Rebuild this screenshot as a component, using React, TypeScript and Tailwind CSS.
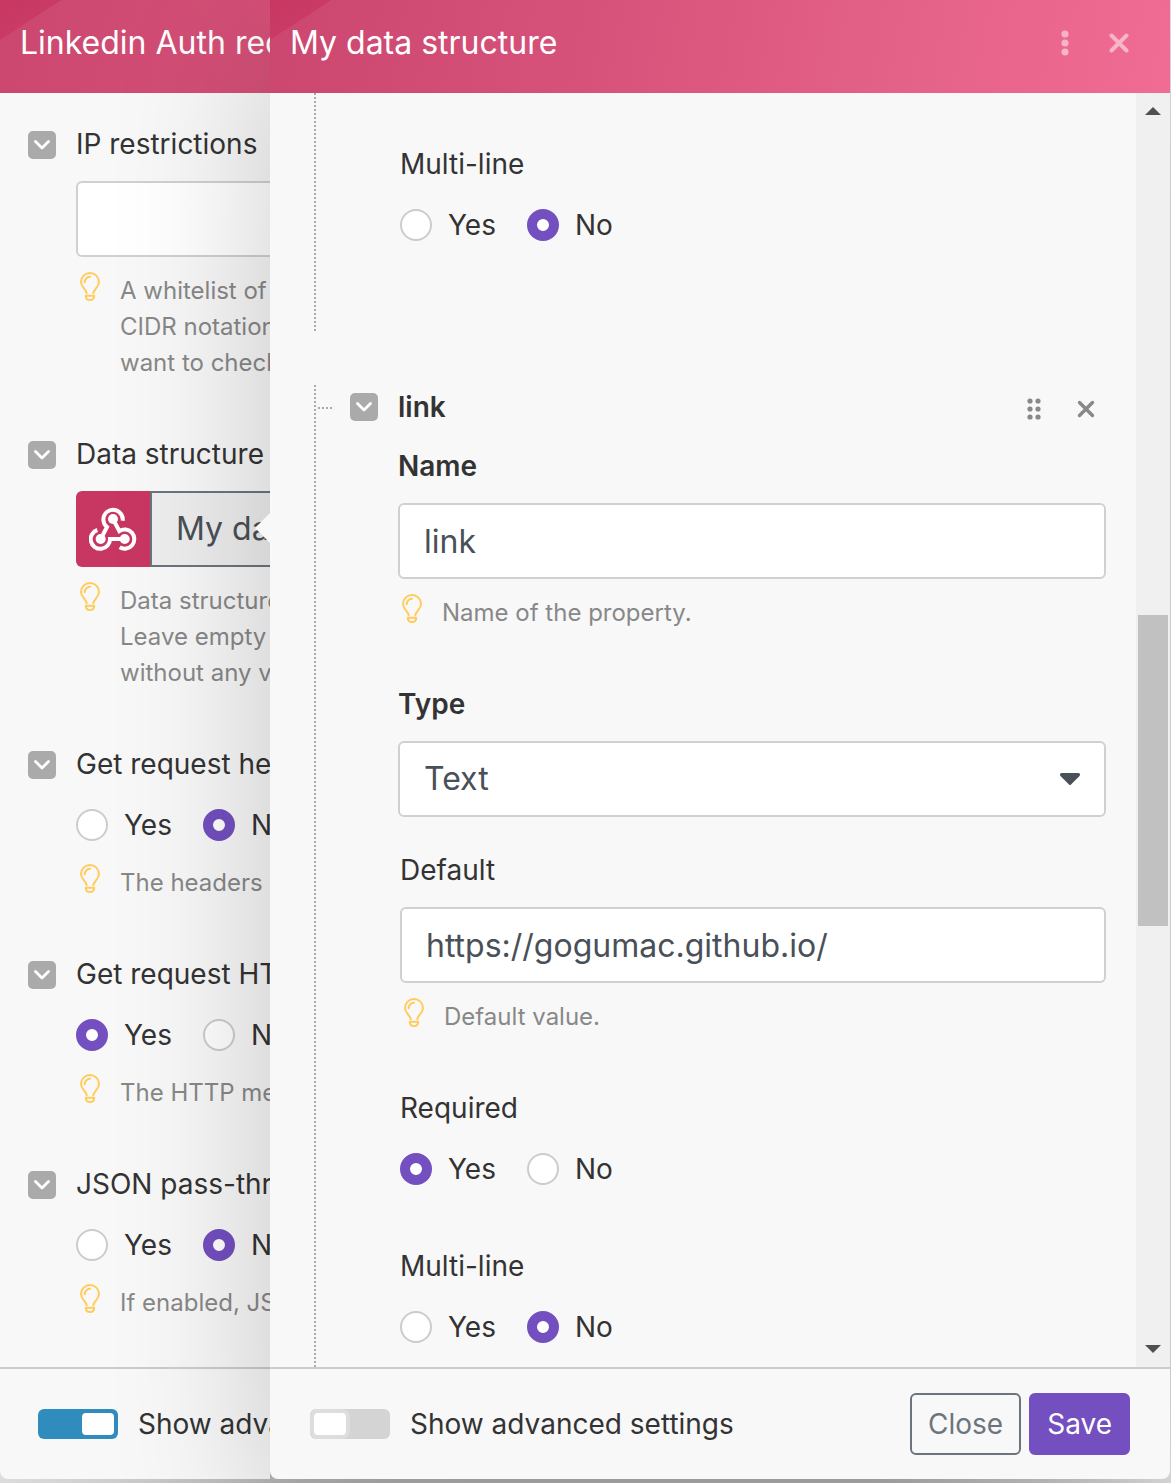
import { useId, type ReactNode } from "react";

function Bulb() {
  return (
    <svg viewBox="0 0 60 87" className="h-[29px] w-5 shrink-0" fill="none" stroke="#ffcc5c" strokeWidth="6" strokeLinecap="round" strokeLinejoin="round" aria-hidden="true">
      <path d="M20 63.500C18 50 3 46 3 30a27 27 0 0 1 54 0C57 46 42 50 40 63.500" />
      <path d="M14 31c0-9 7-16.500 16-16.500" />
      <path d="M17.500 71h25c0 8-4 13-12.500 13s-12.500-5-12.500-13Z" />
    </svg>
  );
}

function Webhook() {
  return (
    <svg viewBox="270 225 144 144" className="size-12" fill="none" stroke="#fff" strokeWidth="12" strokeLinecap="butt" aria-hidden="true">
      <path d="M371 272a29 29 0 1 0-47 19L305 327" />
      <path d="M342 267l19 36a29 29 0 1 1 1 49" />
      <path d="M295 300a29 29 0 1 0 38 27h44" />
      <g fill="#fff" stroke="none">
        <circle cx="342" cy="267" r="15" />
        <circle cx="305" cy="327" r="15" />
        <circle cx="377" cy="327" r="15" />
      </g>
    </svg>
  );
}

function Collapse({ label }: { label: string }) {
  return (
    <button type="button" aria-label={`Collapse ${label}`} className="flex size-7 shrink-0 items-center justify-center rounded-[5px] bg-[#aaaaaa]">
      <svg viewBox="0 0 16 10" className="h-2.5 w-4" fill="none" stroke="#fff" strokeWidth="2.800" strokeLinecap="round" strokeLinejoin="round" aria-hidden="true">
        <path d="M1.500 1.500 8 8l6.500-6.500" />
      </svg>
    </button>
  );
}

function Hint({ lines }: { lines: string[] }) {
  return (
    <div className="mt-[15px] flex gap-5 pl-1 text-2xl leading-9 text-[#888888]">
      <Bulb />
      <p className="pt-px whitespace-nowrap">
        {lines.map((line) => (
          <span key={line} className="block">{line}</span>
        ))}
      </p>
    </div>
  );
}

function YesNo({ label, value }: { label: string; value: "Yes" | "No" }) {
  const name = useId();
  return (
    <div role="radiogroup" aria-label={label} className="mt-6 mb-[23px] flex h-8 items-center gap-[31px]">
      {["Yes", "No"].map((option) => (
        <label key={option} className="flex items-center gap-4">
          <input
            type="radio"
            name={name}
            defaultChecked={option === value}
            className="size-8 appearance-none rounded-full border-2 border-[#cccccc] bg-white checked:border-[10px] checked:border-[#734fbf]"
          />
          {option}
        </label>
      ))}
    </div>
  );
}

function Section({ label, children }: { label: string; children: ReactNode }) {
  return (
    <section className="flex gap-5">
      <div className="flex h-[42px] items-center pt-0.5">
        <Collapse label={label} />
      </div>
      <div className="grow">
        <h3 className="whitespace-nowrap leading-[42px]">{label}</h3>
        {children}
      </div>
    </section>
  );
}

function Header({ title, children }: { title: string; children?: ReactNode }) {
  return (
    <header className="flex h-[93px] shrink-0 items-center justify-between bg-[linear-gradient(147deg,#c83762_0px,#c93b65_33px,transparent_34px),linear-gradient(100deg,#cb476f,#d7527a_35%,#e46187_70%,#f16c94)] pr-[41px] pb-2 pl-5 text-white">
      <h2 className="whitespace-nowrap text-[32px] leading-10">{title}</h2>
      {children}
    </header>
  );
}

function AdvancedToggle({ on }: { on: boolean }) {
  return (
    <label className="flex items-center gap-5 whitespace-nowrap">
      <input
        type="checkbox"
        role="switch"
        defaultChecked={on}
        className="flex h-[30px] w-20 appearance-none rounded-md bg-[#d4d4d4] p-1 before:h-[22px] before:w-8 before:rounded before:bg-white before:shadow-[0_0_0_4px_#dddddd] checked:justify-end checked:bg-[#2f8cbc] checked:before:shadow-none"
      />
      Show advanced settings
    </label>
  );
}

const fieldBox = "h-[76px] w-full rounded-md border-2 border-[#d0d0d0] bg-white px-6 text-[32px] text-[#495057]";
const dots = "bg-[repeating-linear-gradient(to_bottom,#aaaaaa_0px,#aaaaaa_2px,transparent_2px,transparent_4px)]";

function AuthPanel() {
  return (
    <div className="min-w-0 overflow-hidden">
      <div className="flex h-full w-[900px] flex-col rounded-b-lg bg-[#f8f8f8]">
        <Header title="Linkedin Auth request" />
        <main className="flex grow flex-col gap-[52px] px-7 pt-[30px] pb-8">
          <Section label="IP restrictions">
            <input aria-label="IP restrictions" className={`${fieldBox} mt-4 block`} />
            <Hint lines={["A whitelist of", "CIDR notation", "want to check"]} />
          </Section>
          <Section label="Data structure">
            <button type="button" className="mt-4 flex h-[76px] w-full overflow-hidden rounded-md text-[32px] text-[#495057]">
              <span className="flex h-full w-[74px] shrink-0 items-center justify-center bg-[#c83762]">
                <Webhook />
              </span>
              <span className="flex h-full grow items-center border-2 border-[#6c757d] bg-[#eeeeee] px-6">My data structure</span>
            </button>
            <Hint lines={["Data structure", "Leave empty", "without any validation"]} />
          </Section>
          <Section label="Get request headers">
            <YesNo label="Get request headers" value="No" />
            <Hint lines={["The headers will"]} />
          </Section>
          <Section label="Get request HTTP method">
            <YesNo label="Get request HTTP method" value="Yes" />
            <Hint lines={["The HTTP method"]} />
          </Section>
          <Section label="JSON pass-through">
            <YesNo label="JSON pass-through" value="No" />
            <Hint lines={["If enabled, JSON"]} />
          </Section>
        </main>
        <footer className="flex h-28 shrink-0 items-center border-t-2 border-[#cccccc] pl-[38px]">
          <AdvancedToggle on />
        </footer>
      </div>
    </div>
  );
}

function Scrollbar() {
  return (
    <div className="flex w-[34px] shrink-0 flex-col items-center bg-[#f0f0f0]" aria-hidden="true">
      <svg viewBox="0 0 16 8" className="mt-3.5 h-2 w-4" fill="#505050"><path d="M8 0l8 8H0z" /></svg>
      <div className="grow-[500] basis-0" />
      <div className="h-[311px] w-[30px] bg-[#c1c1c1]" />
      <div className="grow-[419] basis-0" />
      <svg viewBox="0 0 16 8" className="mb-3.5 h-2 w-4" fill="#505050"><path d="M0 0h16L8 8z" /></svg>
    </div>
  );
}

function StructurePanel() {
  return (
    <div className="relative z-10 flex min-w-0 flex-col rounded-b-lg bg-[#f8f8f8] shadow-[0_44px_160px_rgba(0,0,0,0.2)]">
      <svg viewBox="0 0 15 30" className="absolute top-[513px] -left-[15px] h-[30px] w-[15px]" fill="#f8f8f8" aria-hidden="true"><path d="M15 0v30L0 15z" /></svg>
      <Header title="My data structure">
        <div className="flex items-center gap-10 text-white/50">
          <button type="button" aria-label="More options">
            <svg viewBox="0 0 8 26" className="h-[26px] w-2" fill="currentColor" aria-hidden="true">
              <circle cx="4" cy="4" r="3.600" /><circle cx="4" cy="13" r="3.600" /><circle cx="4" cy="22" r="3.600" />
            </svg>
          </button>
          <button type="button" aria-label="Close dialog">
            <svg viewBox="0 0 20 20" className="size-5" stroke="currentColor" strokeWidth="4" strokeLinecap="round" aria-hidden="true"><path d="m2.500 2.500 15 15m0-15-15 15" fill="none" /></svg>
          </button>
        </div>
      </Header>
      <div className="flex grow">
        <main className="flex min-w-0 grow flex-col pr-[30px] pl-11">
          <div className="flex">
            <div className={`w-0.5 ${dots}`} />
            <div className="pt-[50px] pb-[69px] pl-[84px]">
              <h4 className="leading-[42px]">Multi-line</h4>
              <YesNo label="Multi-line" value="No" />
            </div>
          </div>
          <div className="mt-[52px] flex grow">
            <div className={`w-0.5 shrink-0 ${dots}`} />
            <div className="mt-[22px] mr-4 ml-0.5 h-0.5 w-4 shrink-0 bg-[repeating-linear-gradient(to_right,#aaaaaa_0px,#aaaaaa_2px,transparent_2px,transparent_4px)]" />
            <div className="min-w-0 grow pt-px">
              <div className="flex h-[42px] items-center gap-5">
                <Collapse label="link" />
                <h3 className="grow font-semibold">link</h3>
                <div className="flex items-center gap-9 pt-1 pr-[11px] text-[#888888]">
                  <button type="button" aria-label="Drag to reorder">
                    <svg viewBox="0 0 14 22" className="h-[22px] w-3.5" fill="currentColor" aria-hidden="true">
                      <circle cx="3" cy="3" r="2.600" /><circle cx="11" cy="3" r="2.600" />
                      <circle cx="3" cy="11" r="2.600" /><circle cx="11" cy="11" r="2.600" />
                      <circle cx="3" cy="19" r="2.600" /><circle cx="11" cy="19" r="2.600" />
                    </svg>
                  </button>
                  <button type="button" aria-label="Remove link">
                    <svg viewBox="0 0 18 18" className="size-[18px]" fill="none" stroke="currentColor" strokeWidth="3.400" strokeLinecap="round" aria-hidden="true"><path d="m2.500 2.500 13 13m0-13-13 13" /></svg>
                  </button>
                </div>
              </div>
              <div className="pl-12">
                <label htmlFor="prop-name" className="mt-[17px] block font-semibold leading-[42px]">Name</label>
                <input id="prop-name" defaultValue="link" className={`${fieldBox} mt-4 block`} />
                <Hint lines={["Name of the property."]} />
                <label htmlFor="prop-type" className="mt-[52px] block font-semibold leading-[42px]">Type</label>
                <div className="relative mt-4">
                  <select id="prop-type" className={`${fieldBox} block appearance-none`}>
                    <option>Text</option>
                  </select>
                  <svg viewBox="0 0 20 12" className="pointer-events-none absolute top-8 right-[26px] h-3 w-5" fill="#495057" aria-hidden="true">
                    <path d="M1.500 0h17Q20 0 20 1.500q0 1-.7 1.700L11 11.500q-1 1-2 0L.7 3.200Q0 2.500 0 1.500 0 0 1.500 0Z" />
                  </svg>
                </div>
                <div className="pt-8 pl-0.5">
                  <label htmlFor="prop-default" className="block leading-[42px]">Default</label>
                  <input id="prop-default" defaultValue="https://gogumac.github.io/" className={`${fieldBox} mt-4 block`} />
                  <Hint lines={["Default value."]} />
                  <h4 className="mt-[52px] leading-[42px]">Required</h4>
                  <YesNo label="Required" value="Yes" />
                  <h4 className="mt-[60px] leading-[42px]">Multi-line</h4>
                  <YesNo label="Multi-line" value="No" />
                </div>
              </div>
            </div>
          </div>
        </main>
        <Scrollbar />
      </div>
      <footer className="flex h-28 shrink-0 items-center justify-between border-t-2 border-[#cccccc] px-10">
        <AdvancedToggle on={false} />
        <div className="flex gap-2">
          <button type="button" className="h-[62px] rounded-md border-2 border-[#6c757d] px-4 text-[#6c757d]">Close</button>
          <button type="button" className="h-[62px] rounded-md border-2 border-[#734fbf] bg-[#734fbf] px-4 text-white">Save</button>
        </div>
      </footer>
    </div>
  );
}

export default function App() {
  return (
    <div className="flex min-h-screen flex-col overflow-hidden bg-[linear-gradient(to_right,#dddddd,#b5b5b5_25%,#b5b5b5_75%,#e2e2e2)] pr-px pb-1 font-['Inter',sans-serif] text-[28px] text-[#333333]">
      <div className="grid grow grid-cols-[270px_minmax(0,1fr)]">
        <AuthPanel />
        <StructurePanel />
      </div>
    </div>
  );
}
